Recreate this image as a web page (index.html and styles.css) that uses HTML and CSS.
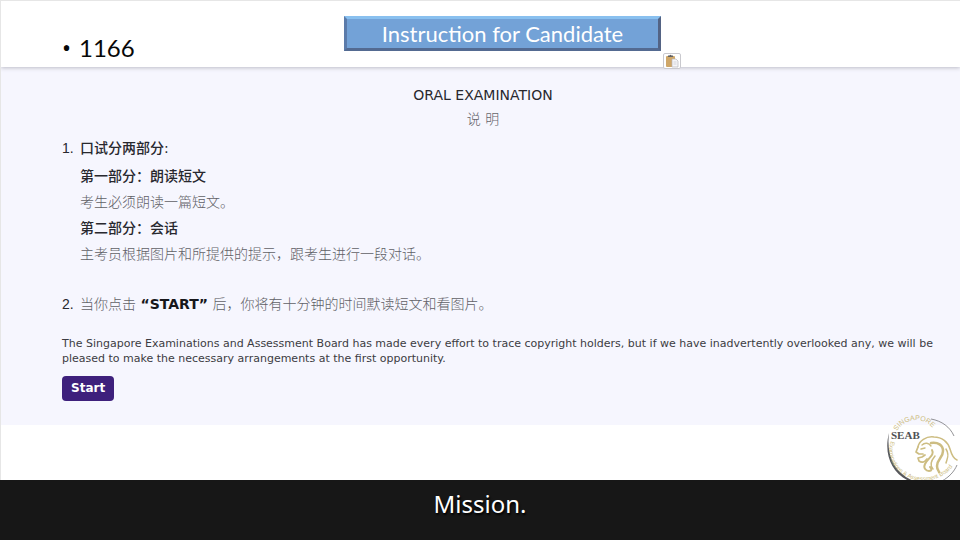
FILE: index.html
```html
<!DOCTYPE html>
<html lang="en">
<head>
<meta charset="utf-8">
<title>Instruction for Candidate</title>
<link rel="stylesheet" href="styles.css">
</head>
<body>
<main class="slide">
  <header class="top">
    <ul class="code"><li>1166</li></ul>
    <h1 class="banner">Instruction for Candidate</h1>
    <button class="paste" aria-label="Paste options">
      <svg viewBox="0 0 14 14" width="14" height="14" aria-hidden="true">
        <rect x="1" y="2" width="9" height="11" rx="1" fill="#cfa768"/>
        <path d="M3 3V1.500H4.500Q5.500 0 6.500 1.500H8V3Z" fill="#626264"/>
        <path d="M7 5h4l2 2v6H7Z" fill="#f6f6f8" stroke="#b5b5ba" stroke-width=".7"/>
        <path d="M8.500 8h3M8.500 10h3" stroke="#c6c6cc" stroke-width=".7"/>
      </svg>
    </button>
  </header>
  <section class="panel">
    <h2 class="title">ORAL EXAMINATION</h2>
    <p class="subtitle" lang="zh">说 明</p>
    <ol class="steps" lang="zh">
      <li>
        <span class="num">1.</span>
        <div class="detail">
          <p class="lead">口试分两部分:</p>
          <p class="part">第一部分：朗读短文</p>
          <p>考生必须朗读一篇短文。</p>
          <p class="part">第二部分：会话</p>
          <p>主考员根据图片和所提供的提示，跟考生进行一段对话。</p>
        </div>
      </li>
      <li>
        <span class="num">2.</span>
        <div class="detail"><p>当你点击 <strong>“START”</strong> 后，你将有十分钟的时间默读短文和看图片。</p></div>
      </li>
    </ol>
    <p class="notice">The Singapore Examinations and Assessment Board has made every effort to trace copyright holders, but if we have inadvertently overlooked any, we will be pleased to make the necessary arrangements at the first opportunity.</p>
    <button class="start">Start</button>
  </section>
  <svg class="logo" viewBox="0 0 76 68" width="76" height="68" role="img" aria-label="Singapore Examinations and Assessment Board">
    <defs>
      <path id="arc-top" d="M13 19A22 22 0 0 1 52 21"/>
      <path id="arc-bottom" d="M7 29A34 30 0 0 0 72 48"/>
    </defs>
    <path d="M5 21C-1 44 9 64 30 71L32 70C11 62 2 44 5 21Z" fill="#57575b"/>
    <path d="M47 7C58 9 66 15 70 24M73 53C70 60 65 65 58 69" fill="none" stroke="#77777b" stroke-width=".8"/>
    <text class="ring ring-top"><textPath href="#arc-top">SINGAPORE</textPath></text>
    <text class="ring ring-bottom"><textPath href="#arc-bottom">Examinations &amp; Assessment Board</textPath></text>
    <text class="seab" x="7" y="27">SEAB</text>
    <g fill="none" stroke="#cdbd82" stroke-linecap="round" stroke-linejoin="round">
      <path d="M34 35C35 29 42 24 50 25C58 25 64 30 66 37C68 44 70 47 73 48" stroke-width="1.500"/>
      <path d="M34 35L32 40L35 42H39M34 46L38 45L41 43M34 46L35 49C38 51 41 50 43 47" stroke-width="1.700"/>
      <path d="M38 33C41 30 45 31 47 34M37 37L41 36" stroke-width="1.400"/>
      <path d="M47 31C54 30 59 33 59 39C59 46 53 47 53 54C53 58 55 59 55 60" stroke-width="2.500"/>
      <path d="M48 38C51 43 44 46 41 52C39 56 42 59 45 59C48 59 48 57 46 55" stroke-width="2"/>
      <path d="M62 37C66 43 63 47 62 51M51 44C46 50 46 54 49 57" stroke-width="1.500"/>
    </g>
  </svg>
</main>
<footer class="caption"><p>Mission.</p></footer>
</body>
</html>
```
FILE: styles.css
```css
* { box-sizing: border-box; }
body, h1, h2, p, ul, ol { margin: 0; padding: 0; }
body {
  min-height: 100vh;
  display: flex;
  flex-direction: column;
  background: #fff;
  font-family: "DejaVu Sans", "Noto Sans CJK SC", sans-serif;
}
.slide {
  flex: 1;
  position: relative;
  overflow: hidden;
  border-top: 1px solid #e6e6e6;
  border-left: 1px solid #e6e6e6;
}
.top {
  position: relative;
  display: grid;
  grid-template-columns: 282px 317px 1fr;
  padding: 15px 17px 16px 61px;
  background: #fff;
  box-shadow: 0 1px 4px #bcbcc6;
  z-index: 1;
}
.code {
  list-style: none;
  align-self: end;
  font: 24px/30px Lato, sans-serif;
  margin-bottom: -12px;
  color: #080808;
}
.code li::before { content: "•"; margin-right: 8px; font-family: "Noto Sans", sans-serif; }
.banner {
  border: 3px solid;
  border-color: #89c0ef #536384 #536a91 #5b7baa;
  background: #73a2d7;
  color: #fff;
  font: 22px/29px Lato, sans-serif;
  text-align: center;
}
.paste {
  position: absolute;
  top: 52px;
  left: 662px;
  width: 18px;
  height: 16px;
  padding: 0 1px;
  border: 1px solid #c9c9ce;
  border-radius: 2px;
  background: #fff;
}
.paste svg { display: block; }
.panel {
  background: #f6f6fe;
  padding: 18px 56px 24px 61px;
  color: #28282e;
}
.title {
  font-size: 14px;
  line-height: 20px;
  font-weight: 400;
  text-align: center;
}
.subtitle {
  margin-top: 4px;
  font-size: 14px;
  line-height: 20px;
  text-align: center;
  color: #65656b;
  font-weight: 300;
}
.steps {
  list-style: none;
  margin-top: 6px;
  font-size: 14px;
  line-height: 26px;
}
.steps li { display: flex; }
.steps li + li { margin-top: 24px; }
.num { width: 18px; font-family: "Liberation Sans", sans-serif; }
.detail { color: #606066; font-weight: 300; }
.lead { margin-bottom: 2px; color: #28282e; font-weight: 500; }
.part { color: #28282e; font-weight: 500; }
strong { color: #17171b; font-weight: 700; }
.notice {
  margin: 19px -36px 0 0;
  color: #3c3c42;
  font-size: 11px;
  line-height: 15px;
}
.start {
  display: block;
  margin-top: 10px;
  padding: 0 9px;
  border: 0;
  border-radius: 4px;
  background: #3e207c;
  color: #fff;
  font: bold 12px/25px "DejaVu Sans", sans-serif;
}
.logo { position: absolute; right: 0; bottom: 0; }
.ring { fill: #cdbd82; font-family: "Liberation Sans", sans-serif; }
.ring-top { font-size: 7px; }
.ring-bottom { font-size: 6px; }
.seab { fill: #505054; font: bold 11px "Liberation Serif", serif; }
.caption {
  padding: 9px 0 21px;
  background: #171717;
  color: #fff;
  font: 24px/30px "Noto Sans", sans-serif;
  text-align: center;
  text-shadow: 1px 2px 2px #000;
}
```
